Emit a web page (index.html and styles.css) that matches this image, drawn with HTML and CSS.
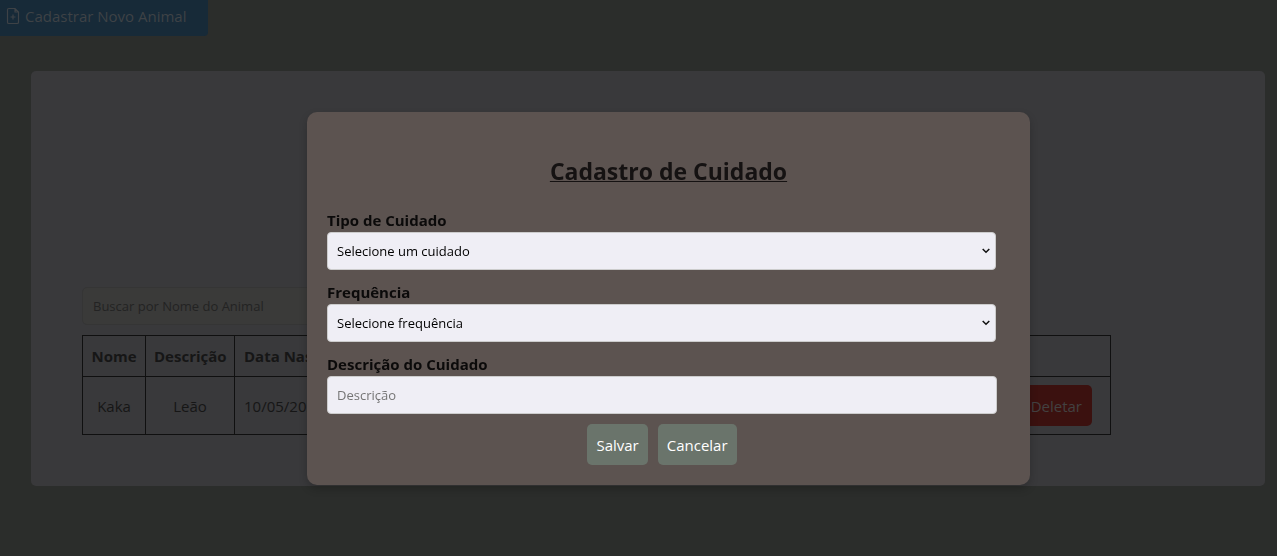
FILE: index.html
```html
<!DOCTYPE html>
<html lang="pt-BR">
<head>
<meta charset="utf-8">
<meta name="viewport" content="width=device-width, initial-scale=1">
<title>Cadastro de Cuidado</title>
<link rel="stylesheet" href="styles.css">
</head>
<body>
<main class="page">
  <button type="button" class="new-animal">
    <svg class="new-animal-icon" viewBox="0 0 14 18" aria-hidden="true">
      <path d="M9 1.5H2.8Q1.5 1.5 1.5 2.8V15.2Q1.5 16.5 2.8 16.5H11.2Q12.5 16.5 12.5 15.2V5L9 1.5ZM9 1.5V5H12.5M7 7.5V12.5M4.5 10H9.5"/>
    </svg>
    <span>Cadastrar Novo Animal</span>
  </button>
  <section class="card">
    <input class="search" type="search" placeholder="Buscar por Nome do Animal" aria-label="Buscar por Nome do Animal">
    <table class="animals">
      <thead>
        <tr><th class="col-name">Nome</th><th class="col-description">Descrição</th><th class="col-date">Data Nascimento</th><th></th></tr>
      </thead>
      <tbody>
        <tr><td>Kaka</td><td>Leão</td><td class="col-date">10/05/2020</td><td class="actions"><button type="button" class="delete">Deletar</button></td></tr>
      </tbody>
    </table>
  </section>
</main>
<div class="overlay">
  <form class="modal" role="dialog" aria-labelledby="modal-title">
    <h2 class="modal-title" id="modal-title">Cadastro de Cuidado</h2>
    <div class="field">
      <label for="tipo">Tipo de Cuidado</label>
      <div class="select-box">
        <select class="control" id="tipo"><option>Selecione um cuidado</option></select>
        <svg class="chevron" viewBox="0 0 8 6" aria-hidden="true"><path d="M0.7 1L4 4.3L7.3 1"/></svg>
      </div>
    </div>
    <div class="field">
      <label for="frequencia">Frequência</label>
      <div class="select-box">
        <select class="control" id="frequencia"><option>Selecione frequência</option></select>
        <svg class="chevron" viewBox="0 0 8 6" aria-hidden="true"><path d="M0.7 1L4 4.3L7.3 1"/></svg>
      </div>
    </div>
    <div class="field">
      <label for="descricao">Descrição do Cuidado</label>
      <input class="control" id="descricao" type="text" placeholder="Descrição">
    </div>
    <div class="modal-buttons">
      <button type="button" class="modal-button">Salvar</button>
      <button type="button" class="modal-button">Cancelar</button>
    </div>
  </form>
</div>
</body>
</html>
```
FILE: styles.css
```css
* { box-sizing: border-box; }
body {
  margin: 0;
  background: #2b2d2b;
  color: #161616;
  font: 16px/24px "Segoe UI", "Open Sans", "Noto Sans", sans-serif;
}
button, input, select { font-family: inherit; }
.page { min-height: 100vh; }
.new-animal {
  display: flex;
  align-items: center;
  gap: 5px;
  height: 36px;
  padding: 0 21px 4px 6px;
  border: 0;
  border-radius: 0 0 4px 0;
  background: #172a38;
  color: #3e4246;
  font-size: 15px;
}
.new-animal-icon {
  width: 14px;
  height: 18px;
  fill: none;
  stroke: currentColor;
  stroke-width: 1.2;
}
.card {
  margin: 35px 12px 0 31px;
  padding: 216px 154px 51px 51px;
  border-radius: 5px;
  background: #39393b;
}
.search {
  display: block;
  width: 50%;
  height: 38px;
  margin-bottom: 10px;
  padding: 0 10px;
  border: 1px solid #353535;
  border-radius: 5px;
  background: #3a3a39;
  font-size: 13px;
}
.search::placeholder { color: #232323; opacity: 1; }
.animals {
  width: 100%;
  border-collapse: collapse;
  table-layout: fixed;
  font-size: 15px;
  white-space: nowrap;
}
th, td {
  padding: 8px;
  border: 1px solid #101010;
  text-align: center;
}
.col-name { width: 63px; }
.col-description { width: 89px; }
.col-date { width: 150px; padding-left: 9px; text-align: left; }
.actions { padding-right: 18px; text-align: right; }
.delete {
  display: inline-block;
  height: 41px;
  padding: 0 10px;
  border: 0;
  border-radius: 5px;
  background: #3b110f;
  color: #434141;
  font-size: 15px;
  vertical-align: middle;
}
.overlay {
  position: fixed;
  inset: 0;
  display: flex;
  justify-content: center;
  align-items: flex-start;
  padding: 112px 0 0 60px;
}
.modal {
  flex: 0 1 723px;
  padding: 45px 33px 20px 20px;
  border-radius: 10px;
  background: #5c5350;
  box-shadow: 0 4px 8px rgba(0, 0, 0, 0.2);
  color: #0b0a0a;
}
.modal-title {
  margin: 0 0 23px 13px;
  color: #151212;
  font-size: 23px;
  line-height: 28px;
  text-align: center;
  text-decoration: underline;
  text-decoration-thickness: 1px;
}
.field { margin-bottom: 10px; }
.field label {
  display: block;
  font-size: 15px;
  font-weight: 700;
  line-height: 24px;
}
.select-box {
  display: grid;
  align-items: center;
  margin-right: 1px;
}
.select-box > * { grid-area: 1 / 1; }
.control {
  display: block;
  width: 100%;
  height: 38px;
  padding: 0 9px;
  border: 1px solid #ccc;
  border-radius: 4px;
  background: #efeef5;
  color: #000;
  font-size: 13px;
  appearance: none;
}
.control::placeholder { color: #757575; opacity: 1; }
.chevron {
  justify-self: end;
  width: 8px;
  height: 6px;
  margin-right: 6px;
  fill: none;
  stroke: #111;
  stroke-width: 1.5;
  pointer-events: none;
}
.modal-buttons {
  display: flex;
  justify-content: center;
  gap: 10px;
}
.modal-button {
  height: 41px;
  padding: 0 9px;
  border: 0;
  border-radius: 5px;
  background: #6a746b;
  color: #fff;
  font-size: 15px;
}
```
